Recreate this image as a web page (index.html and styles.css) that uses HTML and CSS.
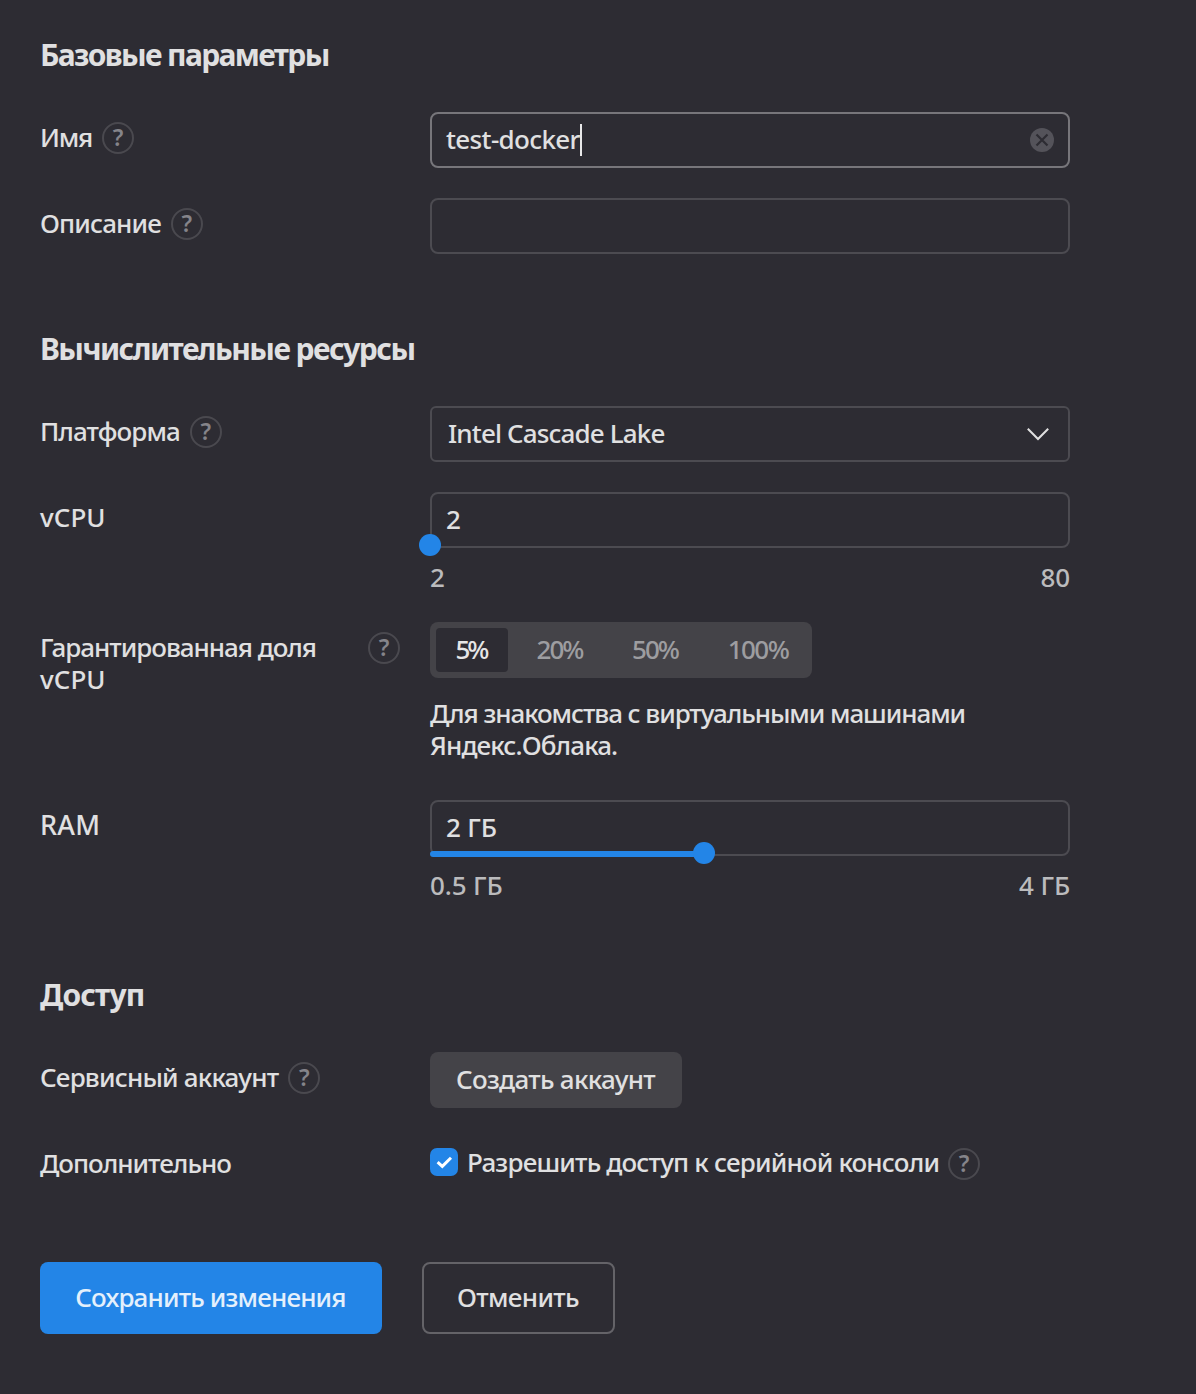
FILE: index.html
```html
<!DOCTYPE html>
<html lang="ru">
<head>
<meta charset="utf-8">
<title>Изменение виртуальной машины</title>
<link rel="stylesheet" href="styles.css">
</head>
<body>
<form class="form">
  <section class="section">
    <h2 class="section-title title-basic">Базовые параметры</h2>
    <div class="row">
      <div class="label"><span class="label-text ls-name">Имя</span><span class="help">?</span></div>
      <div class="control">
        <div class="input input-focused">
          <span class="value ls-value">test-docker</span><span class="caret"></span>
          <svg class="clear" width="24" height="24" viewBox="0 0 24 24"><circle cx="12" cy="12" r="12" fill="#54535a"/><path d="M6.5 6.5 17.5 17.5M17.5 6.5 6.5 17.5" stroke="#2d2c33" stroke-width="2.2" fill="none"/></svg>
        </div>
      </div>
    </div>
    <div class="row">
      <div class="label"><span class="label-text ls-desc">Описание</span><span class="help">?</span></div>
      <div class="control"><div class="input"></div></div>
    </div>
  </section>

  <section class="section">
    <h2 class="section-title title-compute">Вычислительные ресурсы</h2>
    <div class="row">
      <div class="label"><span class="label-text ls-platform">Платформа</span><span class="help">?</span></div>
      <div class="control">
        <div class="input select">
          <span class="value">Intel Cascade Lake</span>
          <svg class="chevron" width="24" height="14" viewBox="0 0 24 14"><path d="M1.8 1.8 12 12 22.2 1.8" stroke="#e0e0e1" stroke-width="2" fill="none"/></svg>
        </div>
      </div>
    </div>
    <div class="row">
      <div class="label"><span class="label-text ls-vcpu">vCPU</span></div>
      <div class="control">
        <div class="slider">
          <div class="input"><span class="value ls-num">2</span></div>
          <div class="knob" style="left: 0%"></div>
        </div>
        <div class="marks"><span>2</span><span>80</span></div>
      </div>
    </div>
    <div class="row">
      <div class="label"><span class="label-text ls-share">Гарантированная доля <span class="ls-vcpu">vCPU</span></span><span class="help">?</span></div>
      <div class="control">
        <div class="segments">
          <span class="segment seg-5 segment-active">5%</span>
          <span class="segment seg-20">20%</span>
          <span class="segment seg-50">50%</span>
          <span class="segment seg-100">100%</span>
        </div>
        <p class="hint">Для знакомства с виртуальными машинами <span class="hint-brand">Яндекс.Облака.</span></p>
      </div>
    </div>
    <div class="row">
      <div class="label"><span class="label-text ls-ram">RAM</span></div>
      <div class="control">
        <div class="slider">
          <div class="input"><span class="value ls-num">2 ГБ</span></div>
          <div class="track" style="width: 42.86%"></div>
          <div class="knob" style="left: 42.86%"></div>
        </div>
        <div class="marks"><span>0.5 ГБ</span><span>4 ГБ</span></div>
      </div>
    </div>
  </section>

  <section class="section">
    <h2 class="section-title title-access">Доступ</h2>
    <div class="row">
      <div class="label"><span class="label-text ls-account">Сервисный аккаунт</span><span class="help">?</span></div>
      <div class="control"><button type="button" class="button-plain">Создать аккаунт</button></div>
    </div>
    <div class="row">
      <div class="label"><span class="label-text ls-extra">Дополнительно</span></div>
      <div class="control">
        <div class="check-row">
          <span class="checkbox"><svg width="28" height="28" viewBox="0 0 28 28"><path d="M7.6 14.2 12.3 18.4 21 9.8" stroke="#fff" stroke-width="3" fill="none"/></svg></span>
          <span class="check-text">Разрешить доступ к серийной консоли</span>
          <span class="help">?</span>
        </div>
      </div>
    </div>
  </section>

  <div class="actions">
    <button type="button" class="button-save">Сохранить изменения</button>
    <button type="button" class="button-cancel">Отменить</button>
  </div>
</form>
</body>
</html>
```
FILE: styles.css
```css
* { box-sizing: border-box; }

body {
  margin: 0;
  min-height: 1394px;
  background: #2d2c33;
  color: #e0e0e1;
  font: 500 26px/32px "Noto Sans", "Open Sans", sans-serif;
  letter-spacing: -0.85px;
}

.form { padding: 35px 40px 60px; }

.section { margin-bottom: 75px; }

.section-title {
  margin: 0 0 37px;
  font-size: 30px;
  line-height: 40px;
  font-weight: 700;
}
.title-basic { letter-spacing: -1.65px; }
.title-compute { letter-spacing: -1.55px; }
.title-access { letter-spacing: -0.85px; }

.row { display: flex; gap: 30px; }
.row + .row { margin-top: 30px; }

.label {
  display: flex;
  align-items: flex-start;
  gap: 10px;
  width: 360px;
  padding-top: 10px;
}
.label-text { margin-top: -1px; }
.control { width: 640px; }

.ls-name { letter-spacing: -1.2px; }
.ls-desc { letter-spacing: -0.87px; }
.ls-platform { letter-spacing: -0.93px; }
.ls-share { letter-spacing: -1.02px; }
.ls-account { letter-spacing: -0.8px; }
.ls-extra { letter-spacing: -1px; }
.ls-value { letter-spacing: -0.65px; }
.ls-vcpu { letter-spacing: 0.1px; }
.ls-ram { font-size: 27px; letter-spacing: 0.2px; }
.ls-num { letter-spacing: -0.2px; }

.help {
  display: flex;
  flex: none;
  align-items: center;
  justify-content: center;
  width: 32px;
  height: 32px;
  padding-bottom: 1px;
  border: 2px solid #4a494f;
  border-radius: 50%;
  color: #85848a;
  font-size: 23px;
  font-weight: 600;
  line-height: 27px;
  letter-spacing: 0;
}

.input {
  display: flex;
  align-items: center;
  height: 56px;
  padding: 0 14px;
  border: 2px solid #4c4b51;
  border-radius: 8px;
}
.input-focused { border-color: #77767b; }
.value { padding-bottom: 2px; }

.caret {
  width: 2px;
  height: 32px;
  background: #e8e8e9;
}
.clear { margin-left: auto; }

.select { padding: 0 18px 0 16px; border-radius: 6px; }
.chevron { margin-left: auto; }

.slider { position: relative; }
.track {
  position: absolute;
  left: 0;
  bottom: -1px;
  height: 6px;
  border-radius: 3px;
  background: #2385e7;
}
.knob {
  position: absolute;
  bottom: -8px;
  width: 22px;
  height: 22px;
  margin-left: -11px;
  border-radius: 50%;
  background: #2385e7;
}
.marks {
  display: flex;
  justify-content: space-between;
  height: 31px;
  margin-top: 13px;
  color: #bbbbbd;
  letter-spacing: -0.15px;
}

.segments {
  display: flex;
  width: 382px;
  height: 56px;
  padding: 6px;
  border-radius: 8px;
  background: #444348;
}
.segment {
  border-radius: 4px;
  line-height: 42px;
  text-align: center;
  color: #9d9da0;
  letter-spacing: -2px;
}
.segment-active { background: #2d2c33; color: #e6e6e7; }
.seg-5 { width: 72px; padding-right: 2px; letter-spacing: -3px; }
.seg-20 { width: 103px; }
.seg-50 { width: 88px; }
.seg-100 { width: 107px; padding-left: 11px; letter-spacing: -1.6px; }

.hint { margin: 19px 0 39px; letter-spacing: -1.06px; }
.hint-brand { letter-spacing: -0.88px; }
.row:has(.hint) + .row { margin-top: 0; }

.button-plain, .button-save, .button-cancel {
  display: block;
  margin: 0;
  padding: 0 1px 2px 0;
  border: 0;
  background: transparent;
  font: inherit;
  color: inherit;
  text-align: center;
  white-space: nowrap;
}
.button-plain {
  width: 252px;
  height: 56px;
  border-radius: 8px;
  background: #444348;
  letter-spacing: -0.7px;
}

.check-row { display: flex; padding-top: 10px; }
.checkbox {
  width: 28px;
  height: 28px;
  border-radius: 7px;
  background: #2385e7;
}
.checkbox svg { display: block; }
.check-text { margin: -2px 9px 0 9px; letter-spacing: -0.81px; }

.actions { display: flex; gap: 40px; padding-top: 7px; }
.button-save {
  width: 342px;
  height: 72px;
  border-radius: 8px;
  background: #2385e7;
  color: #e4f0fc;
  letter-spacing: -0.84px;
}
.button-cancel {
  width: 193px;
  height: 72px;
  border: 2px solid #646368;
  border-radius: 8px;
  letter-spacing: -0.65px;
}
```
